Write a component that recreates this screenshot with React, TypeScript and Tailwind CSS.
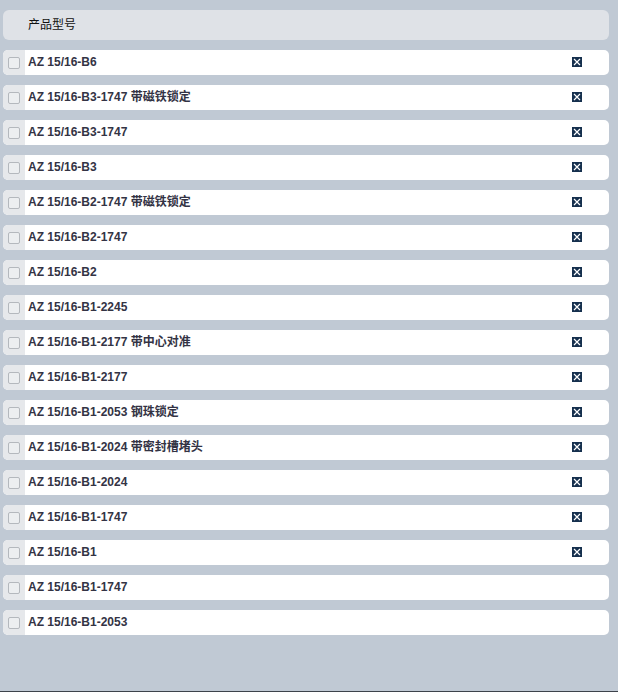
import React from "react";

const rows: { label: string; x: boolean }[] = [
  { label: "AZ 15/16-B6", x: true },
  { label: "AZ 15/16-B3-1747 带磁铁锁定", x: true },
  { label: "AZ 15/16-B3-1747", x: true },
  { label: "AZ 15/16-B3", x: true },
  { label: "AZ 15/16-B2-1747 带磁铁锁定", x: true },
  { label: "AZ 15/16-B2-1747", x: true },
  { label: "AZ 15/16-B2", x: true },
  { label: "AZ 15/16-B1-2245", x: true },
  { label: "AZ 15/16-B1-2177 带中心对准", x: true },
  { label: "AZ 15/16-B1-2177", x: true },
  { label: "AZ 15/16-B1-2053 钢珠锁定", x: true },
  { label: "AZ 15/16-B1-2024 带密封槽堵头", x: true },
  { label: "AZ 15/16-B1-2024", x: true },
  { label: "AZ 15/16-B1-1747", x: true },
  { label: "AZ 15/16-B1", x: true },
  { label: "AZ 15/16-B1-1747", x: false },
  { label: "AZ 15/16-B1-2053", x: false },
];

function XIcon() {
  return (
    <svg width="10" height="10" viewBox="0 0 10 10">
      <rect x="0" y="0" width="10" height="10" fill="#16304e" />
      <path d="M2 2 L8 8 M8 2 L2 8" stroke="#ffffff" strokeWidth="1.2" />
    </svg>
  );
}

export default function App() {
  return (
    <div
      className="w-[618px] h-[692px] bg-[#c0c9d4] flex flex-col relative"
      style={{ fontFamily: '"Liberation Sans", Arial, "Noto Sans CJK SC", sans-serif' }}
    >
      <div className="pt-[10px] pl-[3px] pr-[9px] flex flex-col gap-[10px]">
        <div className="h-[30px] rounded-[6px] bg-[#dfe2e7] flex items-center pl-[25px] text-[12px] text-[#111]">
          产品型号
        </div>
        {rows.map((r, i) => (
          <div key={i} className="h-[25px] rounded-[5px] bg-white flex items-stretch overflow-hidden">
            <div className="w-[22px] bg-[#e6e8eb] flex items-center justify-center">
              <div className="w-[12px] h-[12px] rounded-[2px] border border-[#b4b8bd] bg-[#eceef0]" />
            </div>
            <div className="flex-1 flex items-center pl-[3px] pb-[1px] text-[12px] font-bold text-[#333344]">
              {r.label}
            </div>
            <div className="w-[37px] flex items-center pb-[1px]">
              {r.x && <XIcon />}
            </div>
          </div>
        ))}
      </div>
      <div className="absolute bottom-0 left-0 w-full h-[1px] bg-[#3d434b]" />
    </div>
  );
}
